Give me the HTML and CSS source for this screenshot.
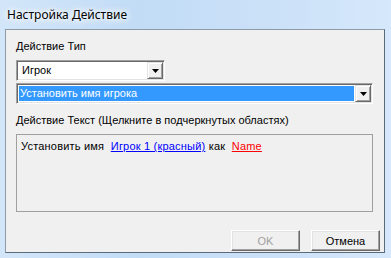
FILE: index.html
```html
<!DOCTYPE html>
<html lang="ru">
<head>
  <meta charset="UTF-8">
  <title>Настройка Действие</title>
  <link rel="stylesheet" href="styles.css">
</head>
<body>
  <div class="window">
    <div class="titlebar"><span class="title">Настройка Действие</span></div>
    <div class="client">
      <div class="label">Действие Тип</div>
      <div class="combo combo-type">
        <span class="combo-value">Игрок</span>
        <span class="combo-btn"><svg width="7" height="4" viewBox="0 0 7 4"><path d="M0 0h7L3.5 4z" fill="#000"/></svg></span>
      </div>
      <div class="combo combo-action">
        <span class="combo-value selected">Установить имя игрока</span>
        <span class="combo-btn"><svg width="7" height="4" viewBox="0 0 7 4"><path d="M0 0h7L3.5 4z" fill="#000"/></svg></span>
      </div>
      <div class="label label-text">Действие Текст (Щелкните в подчеркнутых областях)</div>
      <div class="text-box">Установить имя&nbsp; <a class="link-player">Игрок 1 (красный)</a> как&nbsp; <a class="link-name">Name</a></div>
      <div class="buttons">
        <button class="btn" disabled>OK</button>
        <button class="btn">Отмена</button>
      </div>
    </div>
  </div>
</body>
</html>
```

FILE: styles.css
```css
body { margin: 0; background: #c4ddf6; font-family: "Liberation Sans", Arial, sans-serif; font-size: 11px; color: #000; }
.window { width: 391px; height: 258px; background: linear-gradient(to right, #d3e6f9, #c2dcf6 35%, #cbe1f8 70%, #d6e8fb); padding: 0 6px 5px 5px; box-sizing: border-box; display: flex; flex-direction: column; }
.titlebar { height: 29px; flex: none; display: flex; align-items: center; padding-left: 2px; }
.title { font-family: "Noto Sans", "Open Sans", sans-serif; font-size: 12px; color: #000; text-shadow: 0 0 8px #fff, 0 0 8px #fff, 0 0 4px #fff; margin-top: -1px; }
.client { flex: 1; background: #f0f0f0; border: 1px solid; border-color: #8d9aa7 #5b6b7a #5b6b7a #8d9aa7; padding: 10px 4px 0 10px; }
.label { line-height: 13px; height: 13px; }
.combo { display: flex; height: 21px; box-sizing: border-box; border: 1px solid; border-color: #a0a0a0 #fff #fff #a0a0a0; box-shadow: inset 1px 1px #696969, inset -1px -1px #e3e3e3; background: #fff; padding: 2px; }
.combo-type { width: 149px; margin-top: 7px; }
.combo-action { width: 357px; margin-top: 2px; }
.combo-value { flex: 1; line-height: 15px; padding-left: 2px; }
.combo-type .combo-value { padding-left: 3px; }
.combo-value.selected { background: #3399ff; color: #fff; margin: 0 1px 0 0; padding-left: 1px; }
.combo-btn { width: 16px; height: 17px; margin: -1px -1px 0 0; box-sizing: border-box; background: #f0f0f0; border: 1px solid; border-color: #e3e3e3 #696969 #696969 #e3e3e3; box-shadow: inset 1px 1px #fff, inset -1px -1px #a0a0a0; display: flex; align-items: center; justify-content: center; }
.combo-btn svg { display: block; margin-top: 1px; }
.label-text { margin-top: 10px; }
.text-box { width: 357px; height: 78px; box-sizing: border-box; margin-top: 7px; border: 1px solid #a0a0a0; padding: 5px 4px; line-height: 13px; letter-spacing: 0.2px; }
.text-box a { text-decoration: underline; cursor: pointer; }
.link-player { color: #0000ff; }
.link-name { color: #ff0000; }
.buttons { display: flex; justify-content: flex-end; gap: 11px; margin-top: 18px; }
.btn { width: 69px; height: 21px; font-family: "Liberation Sans", Arial, sans-serif; font-size: 11px; color: #000; background: #f0f0f0; border: 1px solid; border-color: #fff #696969 #696969 #fff; box-shadow: inset -1px -1px #a0a0a0, inset 1px 1px #e3e3e3; padding: 0; }
.btn:disabled { color: #a0a0a0; }
```
